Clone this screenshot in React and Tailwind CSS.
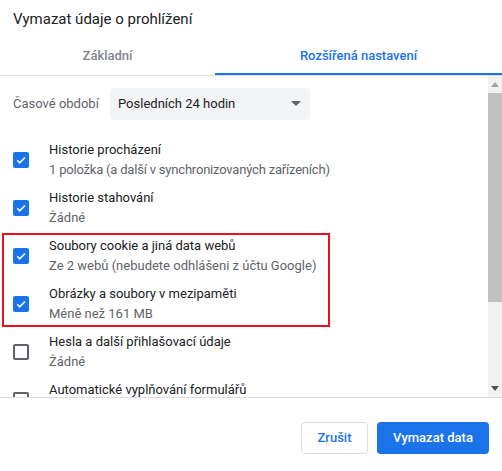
import React, { useState } from 'react';

const font = { fontFamily: 'Roboto, "Noto Sans", Arial, sans-serif' };

const items = [
	{ title: 'Historie procházení', sub: '1 položka (a další v synchronizovaných zařízeních)', checked: true, tight: true },
	{ title: 'Historie stahování', sub: 'Žádné', checked: true },
	{ title: 'Soubory cookie a jiná data webů', sub: 'Ze 2 webů (nebudete odhlášeni z účtu Google)', checked: true, mark: true },
	{ title: 'Obrázky a soubory v mezipaměti', sub: 'Méně než 161 MB', checked: true, mark: true },
	{ title: 'Hesla a další přihlašovací údaje', sub: 'Žádné', checked: false },
	{ title: 'Automatické vyplňování formulářů', sub: 'Žádné', checked: false },
];

const Checkbox = ({ checked }) =>
	checked ? (
		<div className="w-4 h-4 rounded-[2px] bg-[#1a73e8] flex items-center justify-center shrink-0">
			<svg width="12" height="12" viewBox="0 0 24 24" fill="none">
				<path d="M4.5 12.5l5 5L20 7" stroke="white" strokeWidth="3.2" />
			</svg>
		</div>
	) : (
		<div className="w-4 h-4 rounded-[2px] border-2 border-[#5f6368] shrink-0" />
	);

const Row = ({ item }) => (
	<div className="flex items-center h-[48px]">
		<div className="w-[36px] pl-[13px]">
			<Checkbox checked={item.checked} />
		</div>
		<div className="pl-[13px] text-[13px] leading-[20px] whitespace-nowrap">
			<div className="text-[#202124]">{item.title}</div>
			<div className={item.tight ? 'text-[#5f6368] tracking-[-0.2px]' : 'text-[#5f6368]'}>{item.sub}</div>
		</div>
	</div>
);

export default function App() {
	const [tab] = useState(1);
	const marked = items.filter((i) => i.mark);

	return (
		<div className="w-[502px] h-[471px] bg-white flex flex-col overflow-hidden" style={font}>
			<div className="h-[40px] px-[13px] pt-[9px] text-[15px] leading-[20px] text-[#202124]">
				Vymazat údaje o prohlížení
			</div>

			<div className="flex h-[36px] border-b border-[#e0e0e0]">
				<div className="w-[215px] flex items-center justify-center text-[13px] font-medium text-[#80868b] pb-[3px]">
					Základní
				</div>
				<div className="flex-1 flex flex-col">
					<div className="flex-1 flex items-center justify-center text-[13px] font-medium text-[#1a73e8] pb-[1px]">
						Rozšířená nastavení
					</div>
					<div className={tab === 1 ? 'h-[2px] bg-[#1a73e8]' : 'h-[2px]'} />
				</div>
			</div>

			<div className="flex h-[322px] border-b border-[#dadce0]">
				<div className="flex-1 overflow-hidden">
					<div className="flex items-center mt-[12px] h-[32px]">
						<div className="pl-[13px] w-[110px] text-[13px] text-[#5f6368]">Časové období</div>
						<div className="w-[200px] h-[32px] rounded-[4px] bg-[#f1f3f4] flex items-center justify-between pl-[8px] pr-[8px] text-[13px] text-[#202124]">
							<span>Posledních 24 hodin</span>
							<svg width="12" height="6" viewBox="0 0 12 6">
								<path d="M1 0h10L6 5z" fill="#5f6368" />
							</svg>
						</div>
					</div>
					<div className="mt-[16px]">
						{items.slice(0, 2).map((it) => (
							<Row key={it.title} item={it} />
						))}
						<div className="relative">
							{marked.map((it) => (
								<Row key={it.title} item={it} />
							))}
							{/* red highlight frame drawn over the two rows */}
							<div className="absolute left-[2px] top-[1px] w-[328px] h-[94px] border-2 border-[#e81123] pointer-events-none" />
						</div>
						{items.slice(4).map((it) => (
							<Row key={it.title} item={it} />
						))}
					</div>
				</div>
				<div className="w-[14px] bg-[#f1f1f1] flex flex-col items-center">
					<div className="h-[17px] flex items-center justify-center">
						<svg width="8" height="5" viewBox="0 0 8 5">
							<path d="M0 5h8L4 0z" fill="#a3a3a3" />
						</svg>
					</div>
					<div className="w-full h-[209px] bg-[#c1c1c1]" />
					<div className="flex-1" />
					<div className="h-[17px] flex items-center justify-center">
						<svg width="8" height="5" viewBox="0 0 8 5">
							<path d="M0 0h8L4 5z" fill="#505050" />
						</svg>
					</div>
				</div>
			</div>

			<div className="flex justify-end gap-[9px] pt-[24px] pr-[13px]">
				<button className="h-[32px] w-[67px] rounded-[4px] border border-[#dadce0] bg-white text-[13px] font-medium text-[#1a73e8]">
					Zrušit
				</button>
				<button className="h-[32px] w-[112px] rounded-[4px] bg-[#1a73e8] text-[13px] font-medium text-white">
					Vymazat data
				</button>
			</div>
		</div>
	);
}
